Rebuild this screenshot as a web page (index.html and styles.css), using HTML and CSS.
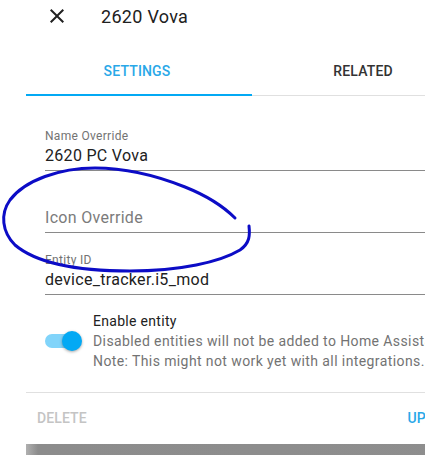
FILE: index.html
```html
<!DOCTYPE html>
<html lang="en">
<head>
    <meta charset="UTF-8">
    <meta name="viewport" content="width=device-width, initial-scale=1.0">
    <title>2620 Vova - Entity settings</title>
    <link rel="stylesheet" href="styles.css">
</head>
<body>
    <div class="dialog">
        <header class="dialog-header">
            <button class="close-button" aria-label="Close">
                <svg viewBox="0 0 24 24" width="24" height="24">
                    <path d="M19,6.41L17.59,5L12,10.59L6.41,5L5,6.41L10.59,12L5,17.59L6.41,19L12,13.41L17.59,19L19,17.59L13.41,12L19,6.41Z"/>
                </svg>
            </button>
            <div class="dialog-title">2620 Vova</div>
        </header>

        <div class="tabs">
            <div class="tab active">Settings</div>
            <div class="tab">Related</div>
        </div>

        <main class="dialog-content">
            <div class="field">
                <div class="field-label">Name Override</div>
                <div class="field-value">2620 PC Vova</div>
            </div>
            <div class="field">
                <div class="field-label"></div>
                <div class="field-value placeholder">Icon Override</div>
            </div>
            <div class="field">
                <div class="field-label">Entity ID</div>
                <div class="field-value">device_tracker.i5_mod</div>
            </div>

            <div class="switch-row">
                <div class="switch-wrap">
                    <div class="switch">
                        <div class="switch-track"></div>
                        <div class="switch-knob"></div>
                    </div>
                </div>
                <div class="switch-text">
                    <div class="switch-title">Enable entity</div>
                    <div class="switch-help">Disabled entities will not be added to Home Assistant.</div>
                    <div class="switch-help">Note: This might not work yet with all integrations.</div>
                </div>
            </div>
        </main>

        <div class="dialog-actions">
            <button class="action delete">Delete</button>
            <button class="action update">Update</button>
        </div>
        <div class="backdrop-bar"></div>
    </div>

    <!-- hand-drawn marker around the icon field -->
    <svg class="scribble" width="425" height="455" viewBox="0 0 425 455">
        <path d="M235,218 C222,205 205,195 185,187 C160,177 130,168 95,168 C60,168 25,180 10,200 C0,214 2,232 15,245 C35,262 75,271 130,271 C180,271 220,262 240,250 C250,243 250,235 249,226"/>
    </svg>
</body>
</html>
```

FILE: styles.css
```css
:root {
    --primary-color: #03a9f4;
    --text-color: #212121;
    --secondary-text: #737373;
    --divider-color: #e0e0e0;
}

html, body {
    margin: 0;
    padding: 0;
    overflow: hidden;
    background-color: white;
}

body {
    font-family: Roboto, 'Noto Sans', sans-serif;
    color: var(--text-color);
    width: 425px;
    height: 455px;
    letter-spacing: 0.3px;
}

.dialog {
    margin-left: 26px;
    width: 467px;
}

.dialog-header {
    height: 32px;
    display: flex;
    align-items: center;
}

.close-button {
    background: none;
    border: none;
    padding: 0;
    margin-left: 19px;
    width: 24px;
    height: 24px;
    cursor: pointer;
}

.close-button svg {
    display: block;
    fill: var(--text-color);
}

.dialog-title {
    margin-left: 32px;
    font-size: 18px;
    font-weight: 400;
}

.tabs {
    margin-top: 16px;
    display: flex;
    border-bottom: 1px solid var(--divider-color);
}

.tab {
    width: 226px;
    height: 48px;
    margin-bottom: -1px;
    box-sizing: border-box;
    border-bottom: 2px solid transparent;
    display: flex;
    justify-content: center;
    align-items: center;
    padding-right: 4px;
    font-size: 14px;
    font-weight: 500;
    letter-spacing: 0.15px;
    text-transform: uppercase;
    color: #333333;
}

.tab.active {
    color: #29a8e8;
    border-bottom-color: var(--primary-color);
}

.dialog-content {
    padding: 13px 0 21px 19px;
}

.field {
    padding: 19px 0 2px;
    border-bottom: 1px solid #8a8a8a;
}

.field-label {
    height: 16px;
    font-size: 12px;
    line-height: 16px;
    color: var(--secondary-text);
}

.field-value {
    font-size: 16px;
    line-height: 24px;
}

.field-value.placeholder {
    color: #7b7b7b;
}

.switch-row {
    margin-top: 16px;
    display: flex;
    align-items: center;
}

.switch-wrap {
    width: 48px;
}

.switch {
    position: relative;
    width: 36px;
    height: 20px;
}

.switch-track {
    position: absolute;
    left: 0;
    top: 3px;
    width: 34px;
    height: 14px;
    border-radius: 7px;
    background-color: #81d4fa;
}

.switch-knob {
    position: absolute;
    left: 17px;
    top: 0;
    width: 20px;
    height: 20px;
    border-radius: 50%;
    background-color: var(--primary-color);
    box-shadow: 0 1px 3px rgba(0, 0, 0, 0.35);
}

.switch-text {
    font-size: 14px;
    line-height: 20px;
    white-space: nowrap;
}

.switch-help {
    color: var(--secondary-text);
    letter-spacing: 0.4px;
}

.dialog-actions {
    border-top: 1px solid var(--divider-color);
    padding: 7px 33px 8px 11px;
    display: flex;
    justify-content: space-between;
}

.action {
    background: none;
    border: none;
    padding: 0;
    height: 36px;
    font-family: Roboto, sans-serif;
    font-size: 14px;
    font-weight: 500;
    letter-spacing: 0.1px;
    text-transform: uppercase;
    cursor: pointer;
}

.action.delete {
    color: #c4c4c4;
}

.action.update {
    color: #29a8e8;
}

.backdrop-bar {
    height: 12px;
    background: linear-gradient(to right, #b0b0b0 0, #8c8c8c 12px, #8e8e8e 100%);
}

.scribble {
    position: absolute;
    left: 0;
    top: 0;
    pointer-events: none;
}

.scribble path {
    fill: none;
    stroke: #0c0cc6;
    stroke-width: 3;
    stroke-linecap: round;
    stroke-linejoin: round;
}
```
